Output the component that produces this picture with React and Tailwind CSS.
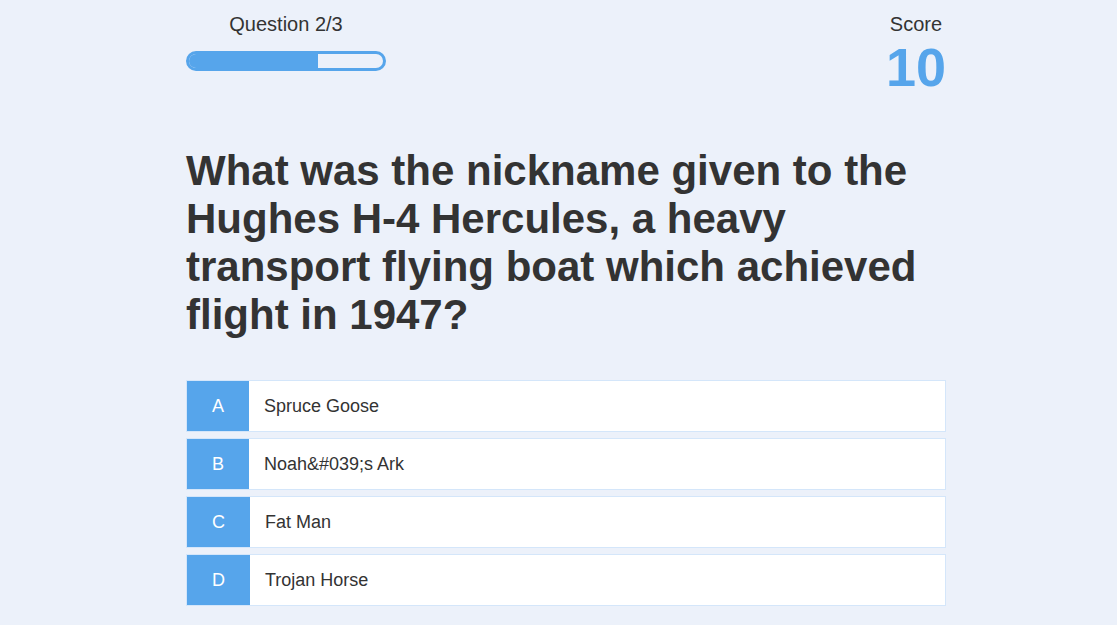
const question = {
  current: 2,
  total: 3,
  score: 10,
  text: "What was the nickname given to the Hughes H-4 Hercules, a heavy transport flying boat which achieved flight in 1947?",
  choices: [
    { prefix: "A", text: "Spruce Goose" },
    { prefix: "B", text: "Noah&#039;s Ark" },
    { prefix: "C", text: "Fat Man" },
    { prefix: "D", text: "Trojan Horse" },
  ],
};

const Hud = ({ current, total, score }) => {
  const progress = (current / total) * 100;
  return (
    <div className="flex justify-between">
      <div className="flex flex-col items-center">
        <p className="text-[20px] leading-[23px] text-[#333]">
          Question {current}/{total}
        </p>
        <div className="mt-[15px] w-[200px] h-[20px] border-[3px] border-[#56a5eb] rounded-full overflow-hidden">
          <div className="h-full bg-[#56a5eb]" style={{ width: `${progress}%` }} />
        </div>
      </div>
      <div className="flex flex-col items-center">
        <p className="text-[20px] leading-[23px] text-[#333]">Score</p>
        <p className="text-[54px] leading-[62px] font-bold text-[#56a5eb]">
          {score}
        </p>
      </div>
    </div>
  );
};

const Choice = ({ prefix, text }) => (
  <div className="flex mb-[6px] bg-white border border-[#d4e6fa] text-[18px] leading-[20px]">
    <p className="px-[25px] py-[15px] bg-[#56a5eb] text-white">{prefix}</p>
    <p className="p-[15px] text-[#333]">{text}</p>
  </div>
);

export default function App() {
  return (
    <div
      className="min-h-screen bg-[#ecf1fa] pt-[13px]"
      style={{ fontFamily: '"Liberation Sans", Arial, sans-serif' }}
    >
      <div className="w-[760px] ml-[186px]">
        <Hud current={question.current} total={question.total} score={question.score} />
        <h2 className="mt-[49px] mb-[41px] text-[42px] leading-[48px] font-bold text-[#333]">
          {question.text}
        </h2>
        {question.choices.map((choice) => (
          <Choice key={choice.prefix} {...choice} />
        ))}
      </div>
    </div>
  );
}
